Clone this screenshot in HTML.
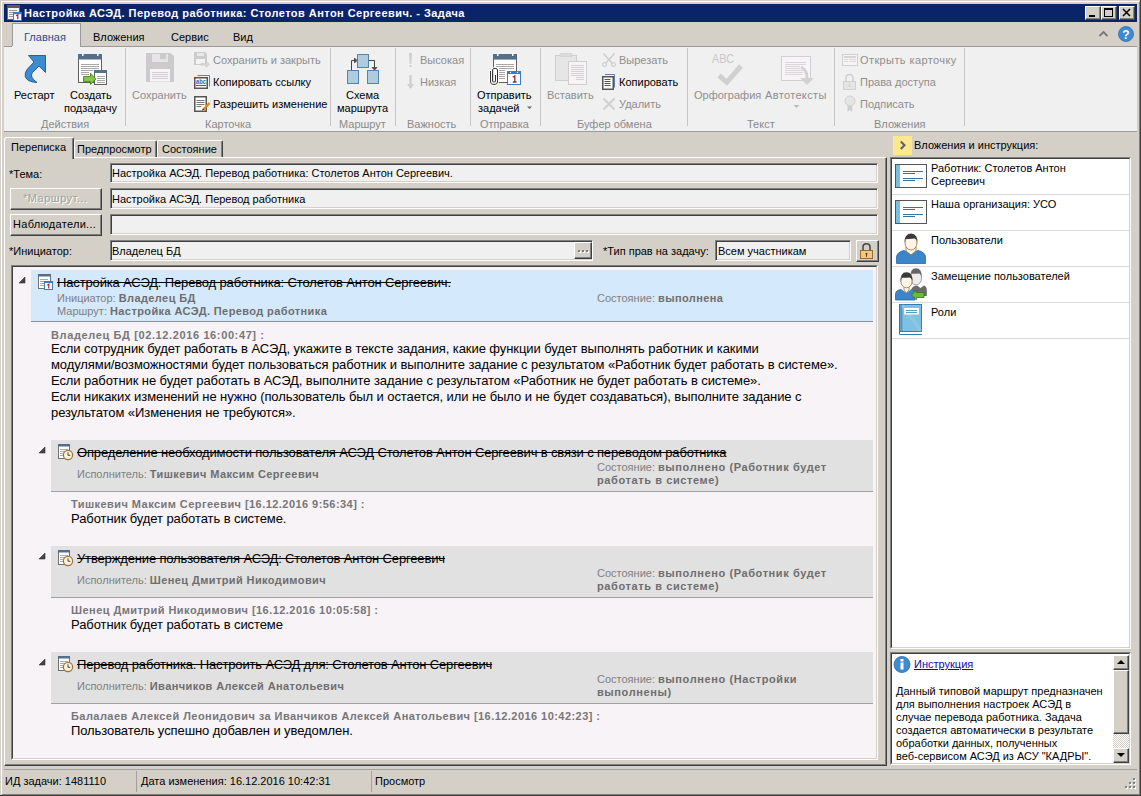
<!DOCTYPE html>
<html><head><meta charset="utf-8">
<style>
*{box-sizing:border-box}
html,body{margin:0;padding:0;width:1141px;height:796px;overflow:hidden;background:#d4d0c8}
body{position:relative;font-family:"Liberation Sans",sans-serif;font-size:11px;color:#000}
.a{position:absolute}
.t{position:absolute;white-space:nowrap;font-size:11px;line-height:13px}
.b{font-weight:bold}
.g{color:#8e8e8e}
.lbl{color:#8a8a8a}
.sep{position:absolute;top:48px;width:1px;height:78px;background:#c5c5c5}
.big{font-size:13px;line-height:16px;letter-spacing:-0.085px}
.st{text-decoration:line-through;letter-spacing:-0.15px}
.lg{color:#808080}
.bv{font-weight:bold;color:#6e6e6e;letter-spacing:0.4px}
.bn{font-weight:bold;color:#777;letter-spacing:0.45px}
.in{position:absolute;background:#f0f0f0;border-top:1px solid #808080;border-left:1px solid #808080;border-right:1px solid #fff;border-bottom:1px solid #fff;box-shadow:inset 1px 1px 0 #404040,inset -1px -1px 0 #d4d0c8}
.btn{position:absolute;background:#d4d0c8;border-top:1px solid #fff;border-left:1px solid #fff;border-right:1px solid #404040;border-bottom:1px solid #404040;box-shadow:inset -1px -1px 0 #808080}
</style></head><body>
<!-- window frame -->
<div class="a" style="left:0;top:0;width:1141px;height:796px;border-right:1px solid #404040;border-bottom:1px solid #404040"></div>
<div class="a" style="left:1px;top:1px;width:1139px;height:794px;border-top:1px solid #fff;border-left:1px solid #fff;border-right:1px solid #808080;border-bottom:1px solid #808080"></div>
<!-- title bar -->
<div class="a" style="left:4px;top:4px;width:1133px;height:18px;background:#0a246a"></div>
<div class="t b" style="left:24px;top:7px;color:#fff;letter-spacing:0.45px">Настройка АСЭД. Перевод работника: Столетов Антон Сергеевич. - Задача</div>
<div class="btn" style="left:1085px;top:6px;width:16px;height:14px"></div>
<div class="btn" style="left:1101px;top:6px;width:16px;height:14px"></div>
<div class="btn" style="left:1119px;top:6px;width:16px;height:14px"></div>

<!-- ribbon tabs -->
<div class="a" style="left:12px;top:23px;width:69px;height:24px;background:#f0f0f0;border:1px solid #9a9a9a;border-bottom:none"></div>
<div class="t" style="left:24px;top:31px;color:#1c4f9c">Главная</div>
<div class="t" style="left:93px;top:31px">Вложения</div>
<div class="t" style="left:171px;top:31px">Сервис</div>
<div class="t" style="left:233px;top:31px">Вид</div>

<!-- ribbon body -->
<div class="a" style="left:4px;top:46px;width:1133px;height:86px;background:#f0f0f0;border-top:1px solid #9a9a9a;border-bottom:1px solid #9a9a9a"></div>
<div class="a" style="left:12px;top:46px;width:68px;height:1px;background:#f0f0f0"></div>

<!-- ribbon content -->
<div class="sep" style="left:125px"></div>
<div class="sep" style="left:330px"></div>
<div class="sep" style="left:395px"></div>
<div class="sep" style="left:470px"></div>
<div class="sep" style="left:540px"></div>
<div class="sep" style="left:687px"></div>
<div class="sep" style="left:834px"></div>
<div class="sep" style="left:964px"></div>

<div class="t" style="left:14px;top:89px">Рестарт</div>
<div class="t" style="left:70px;top:89px">Создать</div>
<div class="t" style="left:64px;top:102px">подзадачу</div>
<div class="t lbl" style="left:41px;top:118px">Действия</div>

<div class="t g" style="left:132px;top:89px">Сохранить</div>
<div class="t g" style="left:213px;top:54px">Сохранить и закрыть</div>
<div class="t" style="left:213px;top:76px">Копировать ссылку</div>
<div class="t" style="left:213px;top:98px">Разрешить изменение</div>
<div class="t lbl" style="left:205px;top:118px">Карточка</div>

<div class="t" style="left:346px;top:89px">Схема</div>
<div class="t" style="left:337px;top:102px">маршрута</div>
<div class="t lbl" style="left:339px;top:118px">Маршрут</div>

<div class="t g" style="left:420px;top:54px">Высокая</div>
<div class="t g" style="left:420px;top:76px">Низкая</div>
<div class="t lbl" style="left:407px;top:118px">Важность</div>

<div class="t" style="left:477px;top:89px">Отправить</div>
<div class="t" style="left:478px;top:102px">задачей</div>
<div class="t lbl" style="left:480px;top:118px">Отправка</div>

<div class="t g" style="left:547px;top:89px">Вставить</div>
<div class="t g" style="left:619px;top:54px">Вырезать</div>
<div class="t" style="left:619px;top:76px">Копировать</div>
<div class="t g" style="left:619px;top:98px">Удалить</div>
<div class="t lbl" style="left:577px;top:118px">Буфер обмена</div>

<div class="t g" style="left:694px;top:89px">Орфография</div>
<div class="t g" style="left:765px;top:89px;letter-spacing:0.35px">Автотексты</div>
<div class="t lbl" style="left:747px;top:118px">Текст</div>

<div class="t g" style="left:860px;top:54px;letter-spacing:0.4px">Открыть карточку</div>
<div class="t g" style="left:860px;top:76px">Права доступа</div>
<div class="t g" style="left:860px;top:98px">Подписать</div>
<div class="t lbl" style="left:874px;top:118px">Вложения</div>


<!-- ribbon icons -->
<svg class="a" style="left:0;top:0" width="1141" height="135" viewBox="0 0 1141 135" shape-rendering="auto">
<!-- title icon -->
<rect x="7.5" y="6.5" width="12" height="13" fill="#f4f4f4" stroke="#666"/>
<rect x="7" y="5" width="13" height="3" fill="#5a5a5a"/>
<path d="M9,10.5h8M9,12.5h4M9,14.5h4M9,16.5h4" stroke="#9a9a9a" stroke-width="1"/>
<rect x="13.5" y="12.5" width="8" height="8" fill="#fff" stroke="#3a7cc4"/>
<rect x="13" y="12" width="9" height="2.2" fill="#3a7cc4"/>
<path d="M16.2,15.8L17.8,14.8V19.2" fill="none" stroke="#b02020" stroke-width="1.2"/>
<!-- title buttons glyphs -->
<rect x="1089" y="15" width="6" height="2" fill="#000"/>
<rect x="1104.5" y="8.5" width="8" height="8" fill="none" stroke="#000"/>
<rect x="1104" y="8" width="9" height="2" fill="#000"/>
<path d="M1123,9L1130,16M1130,9L1123,16" stroke="#000" stroke-width="1.5"/>
<!-- collapse chevron and help -->
<path d="M1099.5,36L1103.5,32L1107.5,36" fill="none" stroke="#777" stroke-width="1.8"/>
<circle cx="1126" cy="34" r="7.5" fill="#3e8ad0" stroke="#2a6db0" stroke-width="0.8"/>
<text x="1126" y="38.5" text-anchor="middle" font-family="Liberation Sans" font-weight="bold" font-size="12" fill="#fff">?</text>

<!-- restart -->
<path d="M28.5,55.5H45.5V72.5L39,66L32.5,72.5Q29,77 37,82.5Q27,82 25.2,76.5Q24.6,72 27.5,69L34,62Z" fill="#3d8bd0" stroke="#1d5396" stroke-width="0.9" stroke-linejoin="miter"/>

<!-- create subtask -->
<rect x="78.5" y="55.5" width="23" height="27" fill="#fff" stroke="#606060"/>
<rect x="78" y="54" width="24" height="5.5" fill="#566e8c"/>
<rect x="82" y="53" width="1.5" height="3" fill="#fff"/><rect x="97" y="53" width="1.5" height="3" fill="#fff"/>
<path d="M81,64.5h18M81,66.5h18M81,68.5h18M81,70.5h12M81,72.5h8M81,74.5h8" stroke="#a8a8a8" stroke-width="1"/>
<rect x="94.5" y="70.5" width="12" height="14" fill="#fff" stroke="#606060"/>
<rect x="94" y="70" width="13" height="3" fill="#566e8c"/>
<path d="M97,76.5h8M97,78.5h8M97,80.5h8M97,82.5h8" stroke="#a8a8a8" stroke-width="1"/>
<path d="M83.5,76.5H90.5V73.2L96,78.9L90.5,84.5V81.5H83.5Z" fill="#8cc24c" stroke="#3d8a1c" stroke-width="0.9"/>

<!-- save (disabled) -->
<path d="M146,53H170.7L174,56.3V82H146Z" fill="#cbcbcb"/>
<rect x="152" y="54" width="16" height="8" fill="#e6e4e6"/>
<rect x="160" y="54" width="6" height="5" fill="#cbcbcb"/>
<rect x="150" y="69" width="20" height="12.5" fill="#f7f3f7"/>
<path d="M152,72.5h16M152,74.5h16M152,76.5h16M152,78.5h16" stroke="#d0d0d0"/>

<!-- save & close small (disabled) -->
<path d="M194,52H205L207,54V65H194Z" fill="#cccccc"/>
<rect x="197" y="53" width="7" height="3" fill="#e8e6e8"/>
<rect x="196" y="59" width="9" height="5" fill="#f4f2f4"/>
<path d="M201,63.5h5v-2.5l3.5,3.3l-3.5,3.3v-2.3h-5z" fill="#d8d8d8" stroke="#c8c8c8" stroke-width="0.6"/>

<!-- copy link abc -->
<path d="M197.5,75.5H209.5V86.5" fill="none" stroke="#5a84b0"/>
<rect x="194.75" y="77.75" width="12.5" height="10.5" fill="#fff" stroke="#555" stroke-width="1.5"/>
<text x="201" y="84.2" text-anchor="middle" font-family="Liberation Sans" font-weight="bold" font-size="7.5" fill="#2a62b0" textLength="10" lengthAdjust="spacingAndGlyphs">abc</text>
<path d="M196,85.5h10" stroke="#2a62b0"/>

<!-- edit allow -->
<rect x="194.75" y="96.75" width="11.5" height="14.5" fill="#fff" stroke="#555" stroke-width="1.5"/>
<path d="M196.5,100.5h8M196.5,102.5h8M196.5,104.5h8M196.5,106.5h5" stroke="#777"/>
<path d="M203,110L209.5,103" stroke="#e08a10" stroke-width="2.4"/>
<path d="M202,110.5l1,-2.2l1.3,1.2z" fill="#333"/>

<!-- schema -->
<rect x="357.5" y="54.5" width="11" height="13" fill="#aecbe0" stroke="#5883a8"/>
<rect x="347.5" y="70.5" width="11" height="13" fill="#aecbe0" stroke="#5883a8"/>
<rect x="367.5" y="70.5" width="11" height="13" fill="#aecbe0" stroke="#5883a8"/>
<path d="M351.5,70V60.5H355" fill="none" stroke="#444"/>
<path d="M354.5,58L357,60.5L354.5,63Z" fill="#444" stroke="#444" stroke-width="0.8"/>
<path d="M369,60.5H374.5V67" fill="none" stroke="#444"/>
<path d="M372,67.5H377L374.5,70Z" fill="#444" stroke="#444" stroke-width="0.8"/>

<!-- importance -->
<path d="M409,53H412L411.3,64H409.7Z" fill="#cfcfcf"/>
<rect x="409.5" y="65" width="2" height="2" fill="#cfcfcf"/>
<path d="M410.5,75V88" stroke="#cfcfcf" stroke-width="2.4"/>
<path d="M407,84L410.5,89L414,84Z" fill="#cfcfcf"/>

<!-- send task -->
<rect x="493.5" y="55.5" width="23" height="27" fill="#fff" stroke="#606060"/>
<rect x="493" y="54" width="24" height="5.6" fill="#566e8c"/>
<rect x="497" y="53" width="1.5" height="3" fill="#fff"/><rect x="512" y="53" width="1.5" height="3" fill="#fff"/>
<path d="M496,64.5h18M496,66.5h18M499,68.5h15M499,70.5h6M499,72.5h6M499,74.5h6M499,76.5h6M499,78.5h6" stroke="#a8a8a8"/>
<path d="M499,82.5h7" stroke="#606060"/>
<path d="M490.5,71V82Q490.5,84.5 494,84.5Q497.5,84.5 497.5,82V70Q497.5,68.3 495,68.3Q492.5,68.3 492.5,70V81Q492.5,82 494,82Q495.5,82 495.5,81V75" fill="none" stroke="#fff" stroke-width="2.6"/>
<path d="M490.5,71V82Q490.5,84.5 494,84.5Q497.5,84.5 497.5,82V70Q497.5,68.3 495,68.3Q492.5,68.3 492.5,70V81Q492.5,82 494,82Q495.5,82 495.5,81V75" fill="none" stroke="#333" stroke-width="1"/>
<rect x="507.5" y="71.5" width="13" height="13" fill="#fff" stroke="#3a7cc4"/>
<rect x="507" y="71" width="14" height="3" fill="#3a7cc4"/>
<circle cx="510.5" cy="72.5" r="0.7" fill="#fff"/><circle cx="517.5" cy="72.5" r="0.7" fill="#fff"/>
<path d="M512.8,77.3L514.8,76V82.3M512.8,82H516.6" fill="none" stroke="#a0282a" stroke-width="1.3"/>
<path d="M527,106.5h5l-2.5,2.5z" fill="#666"/>

<!-- paste (disabled) -->
<rect x="555.5" y="55.5" width="21" height="25" fill="#e6e6e6" stroke="#cfcfcf"/>
<rect x="560" y="53.5" width="12" height="3" rx="1" fill="#dcdcdc" stroke="#cfcfcf" stroke-width="0.8"/>
<rect x="568.5" y="61.5" width="18" height="23" fill="#f7f3f7" stroke="#cfcfcf"/>
<path d="M571,65.5h13M571,67.5h13M571,69.5h13M571,71.5h13M571,73.5h13M571,75.5h13M576,77.5h8M576,79.5h8" stroke="#d2d2d2"/>
<!-- scissors -->
<path d="M603.5,53.5L612.5,63.5M614.5,53.5L605.5,63.5" stroke="#cfcfcf" stroke-width="1.6"/>
<circle cx="604.5" cy="64.5" r="1.9" fill="none" stroke="#cfcfcf" stroke-width="1.2"/>
<circle cx="613.5" cy="64.5" r="1.9" fill="none" stroke="#cfcfcf" stroke-width="1.2"/>
<!-- copy -->
<path d="M605,74.5H614.5V87.5" fill="none" stroke="#5a84b0"/>
<rect x="602.75" y="76.75" width="10.5" height="12.5" fill="#fff" stroke="#555" stroke-width="1.5"/>
<path d="M604.5,79.5h6M604.5,81.5h6M604.5,83.5h6M604.5,85.5h6" stroke="#555"/>
<!-- delete -->
<path d="M603.5,98.5L614.5,109.5M614.5,98.5L603.5,109.5" stroke="#d0d0d0" stroke-width="2"/>

<!-- spelling -->
<text x="712" y="62.6" font-family="Liberation Sans" font-size="12" fill="#c8c8c8" textLength="22" lengthAdjust="spacingAndGlyphs">ABC</text>
<path d="M719,75.5L726.8,82.3L741,66" fill="none" stroke="#d0d0d0" stroke-width="5"/>
<!-- autotext -->
<rect x="781.5" y="56.5" width="29" height="24" fill="#f7f3f7" stroke="#d0d0d0"/>
<path d="M785,62.5h21M785,64.5h21M785,66.5h15M785,68.5h15M785,70.5h18M785,72.5h18M785,74.5h18" stroke="#d8d8d8"/>
<path d="M801,67Q807,70 807,78" fill="none" stroke="#d2d2d2" stroke-width="3"/>
<path d="M800,78H814L807,85Z" fill="#d2d2d2"/>
<path d="M793.5,105h6l-3,3z" fill="#bbb"/>

<!-- card -->
<rect x="842.5" y="54.5" width="15" height="11" fill="#f7f3f7" stroke="#d0d0d0"/>
<rect x="844" y="56" width="12" height="2" fill="#d4d4d4"/>
<path d="M844,59.5h4M849,59.5h7M844,61.5h4M849,61.5h7" stroke="#d8d8d8"/>
<!-- lock -->
<path d="M846,81V77.5Q846,74.5 849.5,74.5Q853,74.5 853,77.5V81" fill="none" stroke="#d0d0d0" stroke-width="1.6"/>
<rect x="843.5" y="81.5" width="12" height="8" fill="#e4e4e4" stroke="#d0d0d0"/>
<path d="M849.5,84v3" stroke="#cfcfcf" stroke-width="1.2"/>
<!-- seal -->
<path d="M847.5,104V112L849.8,110L852.2,112V104Z" fill="#cfcfcf"/>
<circle cx="850" cy="101" r="5" fill="#e4e4e4" stroke="#d0d0d0"/>
</svg>

<!-- tab control -->
<div class="a" style="left:4px;top:157px;width:883px;height:609px;border-top:1px solid #fff;border-left:1px solid #fff;border-right:1px solid #404040;border-bottom:1px solid #404040"></div>
<div class="a" style="left:5px;top:158px;width:881px;height:607px;border-right:1px solid #808080;border-bottom:1px solid #808080"></div>
<!-- inactive tabs -->
<div class="a" style="left:74px;top:140px;width:83px;height:17px;border-top:1px solid #fff;border-left:1px solid #fff;border-right:1px solid #404040;box-shadow:inset -1px 0 0 #808080;border-radius:2px 2px 0 0"></div>
<div class="t" style="left:77px;top:143px">Предпросмотр</div>
<div class="a" style="left:157px;top:140px;width:66px;height:17px;border-top:1px solid #fff;border-left:1px solid #fff;border-right:1px solid #404040;box-shadow:inset -1px 0 0 #808080;border-radius:2px 2px 0 0"></div>
<div class="t" style="left:162px;top:143px">Состояние</div>
<!-- active tab -->
<div class="a" style="left:4px;top:137px;width:70px;height:22px;background:#d4d0c8;border-top:1px solid #fff;border-left:1px solid #fff;border-right:1px solid #404040;box-shadow:inset -1px 0 0 #808080;border-radius:3px 2px 0 0"></div>
<div class="t" style="left:11px;top:141px">Переписка</div>

<!-- form -->
<div class="t" style="left:9px;top:168px">*Тема:</div>
<div class="in" style="left:110px;top:163px;width:768px;height:20px"></div>
<div class="t" style="left:112px;top:167px">Настройка АСЭД. Перевод работника: Столетов Антон Сергеевич.</div>
<div class="btn" style="left:10px;top:188px;width:92px;height:22px"></div>
<div class="t" style="left:24px;top:193px;color:#fff;letter-spacing:0.5px">*Маршрут...</div>
<div class="t" style="left:23px;top:192px;color:#a0a0a0;letter-spacing:0.5px">*Маршрут...</div>
<div class="in" style="left:110px;top:188px;width:768px;height:21px"></div>
<div class="t" style="left:112px;top:193px">Настройка АСЭД. Перевод работника</div>
<div class="btn" style="left:10px;top:214px;width:92px;height:22px"></div>
<div class="t" style="left:13px;top:218px;letter-spacing:0.3px">Наблюдатели...</div>
<div class="in" style="left:110px;top:214px;width:768px;height:21px"></div>
<div class="t" style="left:9px;top:245px">*Инициатор:</div>
<div class="in" style="left:110px;top:240px;width:483px;height:21px"></div>
<div class="t" style="left:112px;top:245px">Владелец БД</div>
<div class="btn" style="left:574px;top:242px;width:18px;height:17px"></div>
<div class="a" style="left:578px;top:250px;width:2px;height:2px;background:#808080;box-shadow:1px 1px 0 #fff,4px 0 0 #808080,5px 1px 0 #fff,8px 0 0 #808080,9px 1px 0 #fff"></div>
<div class="t" style="left:603px;top:245px">*Тип прав на задачу:</div>
<div class="in" style="left:715px;top:240px;width:136px;height:21px"></div>
<div class="t" style="left:718px;top:245px">Всем участникам</div>
<div class="btn" style="left:856px;top:240px;width:23px;height:22px"></div>
<svg class="a" style="left:856px;top:240px" width="23" height="22" viewBox="856 240 23 22">
<path d="M863,250.5V247Q863,243.7 866.5,243.7Q870,243.7 870,247V250.5" fill="none" stroke="#4a4a4a" stroke-width="1.6"/>
<rect x="860.5" y="250.5" width="12" height="8" fill="#f2c880" stroke="#9a6a30"/>
<circle cx="866.5" cy="253.8" r="1" fill="#5a4020"/><path d="M866.5,254v2.8" stroke="#5a4020"/>
</svg>

<div id="tabs"></div>

<!-- main content -->
<div class="a" style="left:11px;top:265px;width:867px;height:495px;border-top:1px solid #808080;border-left:1px solid #808080;border-right:1px solid #fff;border-bottom:1px solid #fff"></div>
<div class="a" style="left:12px;top:266px;width:865px;height:493px;background:#f7f3f7;border-top:1px solid #404040;border-left:1px solid #404040;border-right:1px solid #d4d0c8;border-bottom:1px solid #d4d0c8"></div>

<!-- header 1 -->
<div class="a" style="left:31px;top:270px;width:842px;height:52px;background:#d5e9fc;border-bottom:1px solid #8f8f93"></div>
<div class="t big st" style="left:57px;top:275px">Настройка АСЭД. Перевод работника: Столетов Антон Сергеевич.</div>
<div class="t lg" style="left:57px;top:292px">Инициатор: <span class="bv">Владелец БД</span></div>
<div class="t lg" style="left:57px;top:305px">Маршрут: <span class="bv">Настройка АСЭД. Перевод работника</span></div>
<div class="t lg" style="left:597px;top:292px">Состояние: <span class="bv">выполнена</span></div>
<div class="t bn" style="left:51px;top:329px;letter-spacing:0.62px">Владелец БД [02.12.2016 16:00:47] :</div>
<div class="t big" style="left:51px;top:341px">Если сотрудник будет работать в АСЭД, укажите в тексте задания, какие функции будет выполнять работник и какими</div>
<div class="t big" style="left:51px;top:357px">модулями/возможностями будет пользоваться работник и выполните задание с результатом «Работник будет работать в системе».</div>
<div class="t big" style="left:51px;top:373px">Если работник не будет работать в АСЭД, выполните задание с результатом «Работник не будет работать в системе».</div>
<div class="t big" style="left:51px;top:389px">Если никаких изменений не нужно (пользователь был и остается, или не было и не будет создаваться), выполните задание с</div>
<div class="t big" style="left:51px;top:405px">результатом «Изменения не требуются».</div>

<!-- subtask 1 -->
<div class="a" style="left:51px;top:440px;width:822px;height:52px;background:#e1e1e1;border-bottom:1px solid #a0a0a0"></div>
<div class="t big st" style="left:77px;top:445px">Определение необходимости пользователя АСЭД Столетов Антон Сергеевич в связи с переводом работника</div>
<div class="t lg" style="left:77px;top:468px">Исполнитель: <span class="bv">Тишкевич Максим Сергеевич</span></div>
<div class="t lg" style="left:597px;top:461px">Состояние: <span class="bv" style="letter-spacing:0.6px">выполнено (Работник будет</span></div>
<div class="t lg" style="left:597px;top:474px"><span class="bv" style="letter-spacing:0.6px">работать в системе)</span></div>
<div class="t bn" style="left:71px;top:498px">Тишкевич Максим Сергеевич [16.12.2016 9:56:34] :</div>
<div class="t big" style="left:71px;top:511px">Работник будет работать в системе.</div>

<!-- subtask 2 -->
<div class="a" style="left:51px;top:546px;width:822px;height:52px;background:#e1e1e1;border-bottom:1px solid #a0a0a0"></div>
<div class="t big st" style="left:77px;top:551px">Утверждение пользователя АСЭД: Столетов Антон Сергеевич</div>
<div class="t lg" style="left:77px;top:574px">Исполнитель: <span class="bv">Шенец Дмитрий Никодимович</span></div>
<div class="t lg" style="left:597px;top:567px">Состояние: <span class="bv" style="letter-spacing:0.6px">выполнено (Работник будет</span></div>
<div class="t lg" style="left:597px;top:580px"><span class="bv" style="letter-spacing:0.6px">работать в системе)</span></div>
<div class="t bn" style="left:71px;top:604px">Шенец Дмитрий Никодимович [16.12.2016 10:05:58] :</div>
<div class="t big" style="left:71px;top:617px">Работник будет работать в системе</div>

<!-- subtask 3 -->
<div class="a" style="left:51px;top:652px;width:822px;height:52px;background:#e1e1e1;border-bottom:1px solid #a0a0a0"></div>
<div class="t big st" style="left:77px;top:657px">Перевод работника. Настроить АСЭД для: Столетов Антон Сергеевич</div>
<div class="t lg" style="left:77px;top:680px">Исполнитель: <span class="bv">Иванчиков Алексей Анатольевич</span></div>
<div class="t lg" style="left:597px;top:673px">Состояние: <span class="bv" style="letter-spacing:0.6px">выполнено (Настройки</span></div>
<div class="t lg" style="left:597px;top:686px"><span class="bv" style="letter-spacing:0.6px">выполнены)</span></div>
<div class="t bn" style="left:71px;top:710px">Балалаев Алексей Леонидович за Иванчиков Алексей Анатольевич [16.12.2016 10:42:23] :</div>
<div class="t big" style="left:71px;top:723px">Пользователь успешно добавлен и уведомлен.</div>

<svg class="a" style="left:0;top:260px" width="880" height="500" viewBox="0 260 880 500">
<path d="M19,283H25V277Z" fill="#444" stroke="#333" stroke-width="0.6"/>
<path d="M39,453H45V447Z" fill="#444" stroke="#333" stroke-width="0.6"/>
<path d="M39,559H45V553Z" fill="#444" stroke="#333" stroke-width="0.6"/>
<path d="M39,665H45V659Z" fill="#444" stroke="#333" stroke-width="0.6"/>
<g id="ti1">
<rect x="38.5" y="275.5" width="12" height="13" fill="#fff" stroke="#707070"/>
<rect x="38" y="274" width="13" height="2.5" fill="#566e8c"/>
<path d="M40,279.5h8M40,281.5h8M40,283.5h4M40,285.5h4" stroke="#aaa"/>
<rect x="44.5" y="281.5" width="8" height="8" fill="#fff" stroke="#3a7cc4"/>
<rect x="44" y="281" width="9" height="2" fill="#3a7cc4"/>
<path d="M47.3,285.2L48.8,284.2V288.5" fill="none" stroke="#b02020" stroke-width="1.2"/>
</g>
<g id="ti2">
<rect x="58.5" y="445.5" width="11" height="13" fill="#fff" stroke="#707070"/>
<rect x="58" y="444" width="12" height="2.5" fill="#566e8c"/>
<path d="M60,449.5h8M60,451.5h8M60,453.5h3M60,455.5h3" stroke="#aaa"/>
<circle cx="68" cy="455" r="4.6" fill="#fdf3dc" stroke="#a07030" stroke-width="1.2"/>
<path d="M68,452.3V455.3H70.3" fill="none" stroke="#333" stroke-width="0.9"/>
</g>
<use href="#ti2" y="106"/>
<use href="#ti2" y="212"/>
</svg>


<!-- right panel -->
<div class="a" style="left:893px;top:136px;width:19px;height:19px;background:#fde78f"></div>
<div class="t" style="left:914px;top:139px">Вложения и инструкция:</div>
<div class="a" style="left:890px;top:157px;width:241px;height:492px;border-top:1px solid #808080;border-left:1px solid #808080;border-right:1px solid #fff;border-bottom:1px solid #fff"></div>
<div class="a" style="left:891px;top:158px;width:239px;height:490px;background:#fff;border-top:1px solid #404040;border-left:1px solid #404040;border-right:1px solid #d4d0c8;border-bottom:1px solid #d4d0c8"></div>
<div class="a" style="left:892px;top:194px;width:237px;height:1px;background:#dcdcdc"></div>
<div class="a" style="left:892px;top:230px;width:237px;height:1px;background:#dcdcdc"></div>
<div class="a" style="left:892px;top:266px;width:237px;height:1px;background:#dcdcdc"></div>
<div class="a" style="left:892px;top:302px;width:237px;height:1px;background:#dcdcdc"></div>
<div class="a" style="left:892px;top:338px;width:237px;height:1px;background:#dcdcdc"></div>
<div class="t" style="left:931px;top:162px">Работник: Столетов Антон</div>
<div class="t" style="left:931px;top:175px">Сергеевич</div>
<div class="t" style="left:931px;top:198px">Наша организация: УСО</div>
<div class="t" style="left:931px;top:234px">Пользователи</div>
<div class="t" style="left:931px;top:270px">Замещение пользователей</div>
<div class="t" style="left:931px;top:306px">Роли</div>

<div class="a" style="left:890px;top:652px;width:241px;height:113px;border-top:1px solid #808080;border-left:1px solid #808080;border-right:1px solid #fff;border-bottom:1px solid #fff"></div>
<div class="a" style="left:891px;top:653px;width:239px;height:111px;background:#fff;border-top:1px solid #404040;border-left:1px solid #404040;border-right:1px solid #d4d0c8;border-bottom:1px solid #d4d0c8"></div>
<div class="t" style="left:914px;top:658px;color:#0c0ca8;text-decoration:underline">Инструкция</div>
<div class="t" style="left:896px;top:685px">Данный типовой маршрут предназначен</div>
<div class="t" style="left:896px;top:698px">для выполнения настроек АСЭД в</div>
<div class="t" style="left:896px;top:711px">случае перевода работника. Задача</div>
<div class="t" style="left:896px;top:724px">создается автоматически в результате</div>
<div class="t" style="left:896px;top:737px">обработки данных, полученных</div>
<div class="t" style="left:896px;top:750px">веб-сервисом АСЭД из АСУ "КАДРЫ".</div>
<!-- scrollbar -->
<div class="a" style="left:1113px;top:655px;width:16px;height:108px;background-color:#e8e6e2;background-image:repeating-conic-gradient(#fff 0 25%, #d4d0c8 0 50%);background-size:2px 2px"></div>
<div class="btn" style="left:1113px;top:655px;width:16px;height:15px"></div>
<div class="btn" style="left:1113px;top:670px;width:16px;height:64px"></div>
<div class="btn" style="left:1113px;top:748px;width:16px;height:15px"></div>

<svg class="a" style="left:880px;top:130px" width="261" height="666" viewBox="880 130 261 666">
<path d="M900.8,141.5L904.5,145.3L900.8,149" fill="none" stroke="#5a6270" stroke-width="2"/>
<g id="card">
<rect x="895.5" y="164.5" width="31" height="23" fill="#fff" stroke="#555"/>
<rect x="896" y="165" width="4" height="22" fill="#78c0e0"/>
<path d="M903,171.5h20M903,173.5h12M903,178.5h20M903,180.5h12" stroke="#3c6f9c"/>
</g>
<use href="#card" y="36"/>
<!-- user -->
<path d="M896.5,263.5V257Q897,252 904,250.5L911,254L918,250.5Q925,252 925.5,257V263.5Z" fill="#3a86c8" stroke="#2a68a8" stroke-width="0.8"/>
<path d="M906,247V251L911,255L916,251V247Z" fill="#fdf6e8" stroke="#9a6a3a" stroke-width="0.8"/>
<ellipse cx="911" cy="243" rx="6" ry="7" fill="#fdf6e8" stroke="#9a6a3a" stroke-width="0.8"/>
<path d="M904.5,243Q904,234 911,233.5Q918,234 917.5,243Q917,238 914,238.5Q909,239 905.5,239Z" fill="#3a3a3a"/>
<!-- substitution -->
<path d="M911.5,296V289.5Q912,286 917,285.5L920.5,288L924,285.5Q926.8,286.5 926.8,290V296Z" fill="#6a6a6a"/>
<ellipse cx="916" cy="278" rx="5.6" ry="7" fill="#ececec" stroke="#888" stroke-width="0.8"/>
<path d="M910.3,278Q909.8,268.3 916,268.3Q922.2,268.3 921.7,278Q921.5,273.5 918.5,273.5Q913.5,274 911,273.5Z" fill="#666"/>
<path d="M895.5,300V293.5Q896,290.3 901,289.5L906.5,293.5L911.5,289.5Q915,290.3 915,293.5V300Z" fill="#3a86c8" stroke="#2a68a8" stroke-width="0.8"/>
<path d="M904,286.5V290L906.5,293L909,290V286.5Z" fill="#fdf6e8" stroke="#9a6a3a" stroke-width="0.7"/>
<ellipse cx="906.5" cy="281.5" rx="5.6" ry="6.3" fill="#fdf6e8" stroke="#9a6a3a" stroke-width="0.8"/>
<path d="M900.5,282Q900,272.3 906.5,272.3Q913,272.3 912.5,282Q912,277.5 909,277.5Q904,278 901.5,277.5Z" fill="#3a3a3a"/>
<path d="M911.5,295L916.5,290.3V292.5H924V297.5H916.5V299.7Z" fill="#6cb83a" stroke="#2e7a1a" stroke-width="0.8"/>
<!-- book -->
<rect x="899.5" y="304.5" width="22" height="27" fill="#80c0e2" stroke="#3a7aa8"/>
<rect x="900" y="305" width="2.5" height="26" fill="#5a9ac8"/>
<path d="M902,305L921,331" stroke="#a8d6ee" stroke-width="3" opacity="0.35"/>
<path d="M899.5,331.5V334.5H922" fill="none" stroke="#3a7aa8"/>
<rect x="901" y="332" width="20.5" height="2" fill="#fff"/>
<rect x="904" y="308" width="15" height="6.5" fill="#fff"/>
<path d="M906,310.5h11M906,312.5h11" stroke="#5a9ac8"/>
<!-- info icon -->
<circle cx="902" cy="664.5" r="8" fill="#3d8bd0" stroke="#2a6ab0" stroke-width="0.8"/>
<rect x="900.5" y="659" width="3" height="2.5" fill="#fff"/>
<rect x="900.5" y="662.5" width="3" height="7" fill="#fff"/>
<!-- scroll arrows -->
<path d="M1117,664h8l-4,-4z" fill="#000"/>
<path d="M1117,753h8l-4,4z" fill="#000"/>
<!-- size grip -->
<g fill="#fff"><rect x="1134" y="779" width="2" height="2"/><rect x="1130" y="783" width="2" height="2"/><rect x="1134" y="783" width="2" height="2"/><rect x="1126" y="787" width="2" height="2"/><rect x="1130" y="787" width="2" height="2"/><rect x="1134" y="787" width="2" height="2"/></g>
<g fill="#808080"><rect x="1133" y="778" width="2" height="2"/><rect x="1129" y="782" width="2" height="2"/><rect x="1133" y="782" width="2" height="2"/><rect x="1125" y="786" width="2" height="2"/><rect x="1129" y="786" width="2" height="2"/><rect x="1133" y="786" width="2" height="2"/></g>
</svg>


<!-- status bar -->
<div class="a" style="left:4px;top:769px;width:1133px;height:1px;background:#a0a0a0"></div>
<div class="t" style="left:5px;top:775px">ИД задачи: 1481110</div>
<div class="a" style="left:136px;top:771px;width:1px;height:21px;background:#a0a0a0"></div>
<div class="t" style="left:141px;top:775px">Дата изменения: 16.12.2016 10:42:31</div>
<div class="a" style="left:371px;top:771px;width:1px;height:21px;background:#a0a0a0"></div>
<div class="t" style="left:375px;top:775px">Просмотр</div>
</body></html>
